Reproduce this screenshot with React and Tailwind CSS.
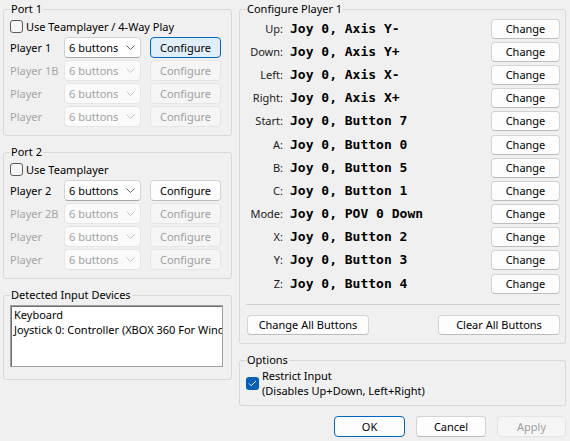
import React from 'react';

const Chevron = ({ disabled }) => (
  <svg width="9" height="5" viewBox="0 0 9 5" fill="none">
    <path d="M0.5 0.5l4 4 4-4" stroke={disabled ? '#c4c4c4' : '#5f5f5f'} strokeWidth="1" />
  </svg>
);

const Select = ({ disabled }) => (
  <div
    className={
      'w-[77px] h-[21px] flex items-center justify-between pl-[4px] pr-[5px] rounded-[4px] border ' +
      (disabled
        ? 'bg-[#fafafa] border-[#e6e6e6] text-[#a2a2a2]'
        : 'bg-white border-[#d3d3d3] border-b-[#a8a8a8] text-black')
    }
  >
    <span>6 buttons</span>
    <Chevron disabled={disabled} />
  </div>
);

const Button = ({ children, disabled, primary, focused, className = '' }) => {
  let look = 'bg-[#fdfdfd] border-[#d3d3d3] border-b-[#bcbcbc] text-black';
  if (disabled) look = 'bg-[#f5f5f5] border-[#e5e5e5] text-[#a0a0a0]';
  if (focused) look = 'bg-[#e0eef9] border-[#0067c0] text-black';
  if (primary) look = 'bg-[#fdfdfd] border-[#0067c0] text-black';
  return (
    <div className={'h-[20px] flex items-center justify-center rounded-[4px] border ' + look + ' ' + className}>
      {children}
    </div>
  );
};

const Checkbox = ({ checked }) =>
  checked ? (
    <div className="w-[13px] h-[13px] rounded-[3px] bg-[#005fb8] flex items-center justify-center shrink-0">
      <svg width="9" height="7" viewBox="0 0 9 7" fill="none">
        <path d="M1 3.5l2.2 2.2L8 1" stroke="white" strokeWidth="1" />
      </svg>
    </div>
  ) : (
    <div className="w-[13px] h-[13px] rounded-[3px] border border-[#5c5c5c] bg-[#f6f6f6] shrink-0" />
  );

const Group = ({ title, className = '', children }) => (
  <fieldset className={'border border-[#d8d8d8] rounded-[3px] px-[6px] ' + className}>
    <legend className="px-[1px] leading-[16px] text-black">{title}</legend>
    {children}
  </fieldset>
);

const PlayerRow = ({ label, enabled, focused }) => (
  <div className="flex items-center h-[23px]">
    <span className={'w-[54px] whitespace-nowrap ' + (enabled ? 'text-black' : 'text-[#a6a6a6]')}>{label}</span>
    <Select disabled={!enabled} />
    <Button disabled={!enabled} focused={focused} className="ml-[9px] w-[71px] h-[21px]">
      Configure
    </Button>
  </div>
);

const mappings = [
  ['Up:', 'Joy 0, Axis Y-'],
  ['Down:', 'Joy 0, Axis Y+'],
  ['Left:', 'Joy 0, Axis X-'],
  ['Right:', 'Joy 0, Axis X+'],
  ['Start:', 'Joy 0, Button 7'],
  ['A:', 'Joy 0, Button 0'],
  ['B:', 'Joy 0, Button 5'],
  ['C:', 'Joy 0, Button 1'],
  ['Mode:', 'Joy 0, POV 0 Down'],
  ['X:', 'Joy 0, Button 2'],
  ['Y:', 'Joy 0, Button 3'],
  ['Z:', 'Joy 0, Button 4'],
];

export default function App() {
  return (
    <div className="w-[570px] h-[441px] bg-[#f0f0f0] font-['Noto_Sans',sans-serif] text-[11px] leading-[16px] text-black overflow-hidden pt-[1px]">
      <div className="flex">
        {/* left column */}
        <div className="ml-[3px] w-[229px] flex flex-col">
          <Group title="Port 1" className="pb-[7px]">
            <div className="flex items-center h-[19px] gap-[3px]">
              <Checkbox />
              <span>Use Teamplayer / 4-Way Play</span>
            </div>
            <PlayerRow label="Player 1" enabled focused />
            <PlayerRow label="Player 1B" />
            <PlayerRow label="Player" />
            <PlayerRow label="Player" />
          </Group>

          <Group title="Port 2" className="mt-[8px] pb-[7px]">
            <div className="flex items-center h-[19px] gap-[3px]">
              <Checkbox />
              <span>Use Teamplayer</span>
            </div>
            <PlayerRow label="Player 2" enabled />
            <PlayerRow label="Player 2B" />
            <PlayerRow label="Player" />
            <PlayerRow label="Player" />
          </Group>

          <Group title="Detected Input Devices" className="mt-[8px] pb-[12px]">
            <div className="mt-[2px] w-[213px] h-[62px] bg-white border border-[#a0a0a0] shadow-[inset_1px_1px_0_#6e6e6e] overflow-hidden pl-[3px] pt-[1px] leading-[15px]">
              <div className="whitespace-nowrap">Keyboard</div>
              <div className="whitespace-nowrap">Joystick 0: Controller (XBOX 360 For Windows)</div>
            </div>
          </Group>
        </div>

        {/* right column */}
        <div className="ml-[7px] w-[327px] flex flex-col">
          <Group title="Configure Player 1" className="pb-[8px] pr-[5px]">
            {mappings.map(([label, value]) => (
              <div key={label} className="flex items-center h-[23.2px]">
                <span className="w-[37px] text-right text-[#1a1a1a] whitespace-nowrap">{label}</span>
                <span className="ml-[7px] flex-1 font-['DejaVu_Sans_Mono',monospace] font-bold text-[13px] whitespace-pre">
                  {value}
                </span>
                <Button className="w-[69px]">Change</Button>
              </div>
            ))}
            <div className="mt-[9px] h-[1px] bg-[#d0d0d0]" />
            <div className="mt-[10px] flex justify-between">
              <Button className="w-[122px] ml-[1px]">Change All Buttons</Button>
              <Button className="w-[122px]">Clear All Buttons</Button>
            </div>
          </Group>

          <Group title="Options" className="mt-[8px] pb-[7px]">
            <div className="flex items-center gap-[3px] leading-[15px]">
              <Checkbox checked />
              <div>
                <div>Restrict Input</div>
                <div>(Disables Up+Down, Left+Right)</div>
              </div>
            </div>
          </Group>

          <div className="mt-[10px] flex justify-end gap-[11px]">
            <Button primary className="w-[71px] h-[21px]">OK</Button>
            <Button className="w-[70px] h-[21px]">Cancel</Button>
            <Button disabled className="w-[69px] h-[21px]">Apply</Button>
          </div>
        </div>
      </div>
    </div>
  );
}
